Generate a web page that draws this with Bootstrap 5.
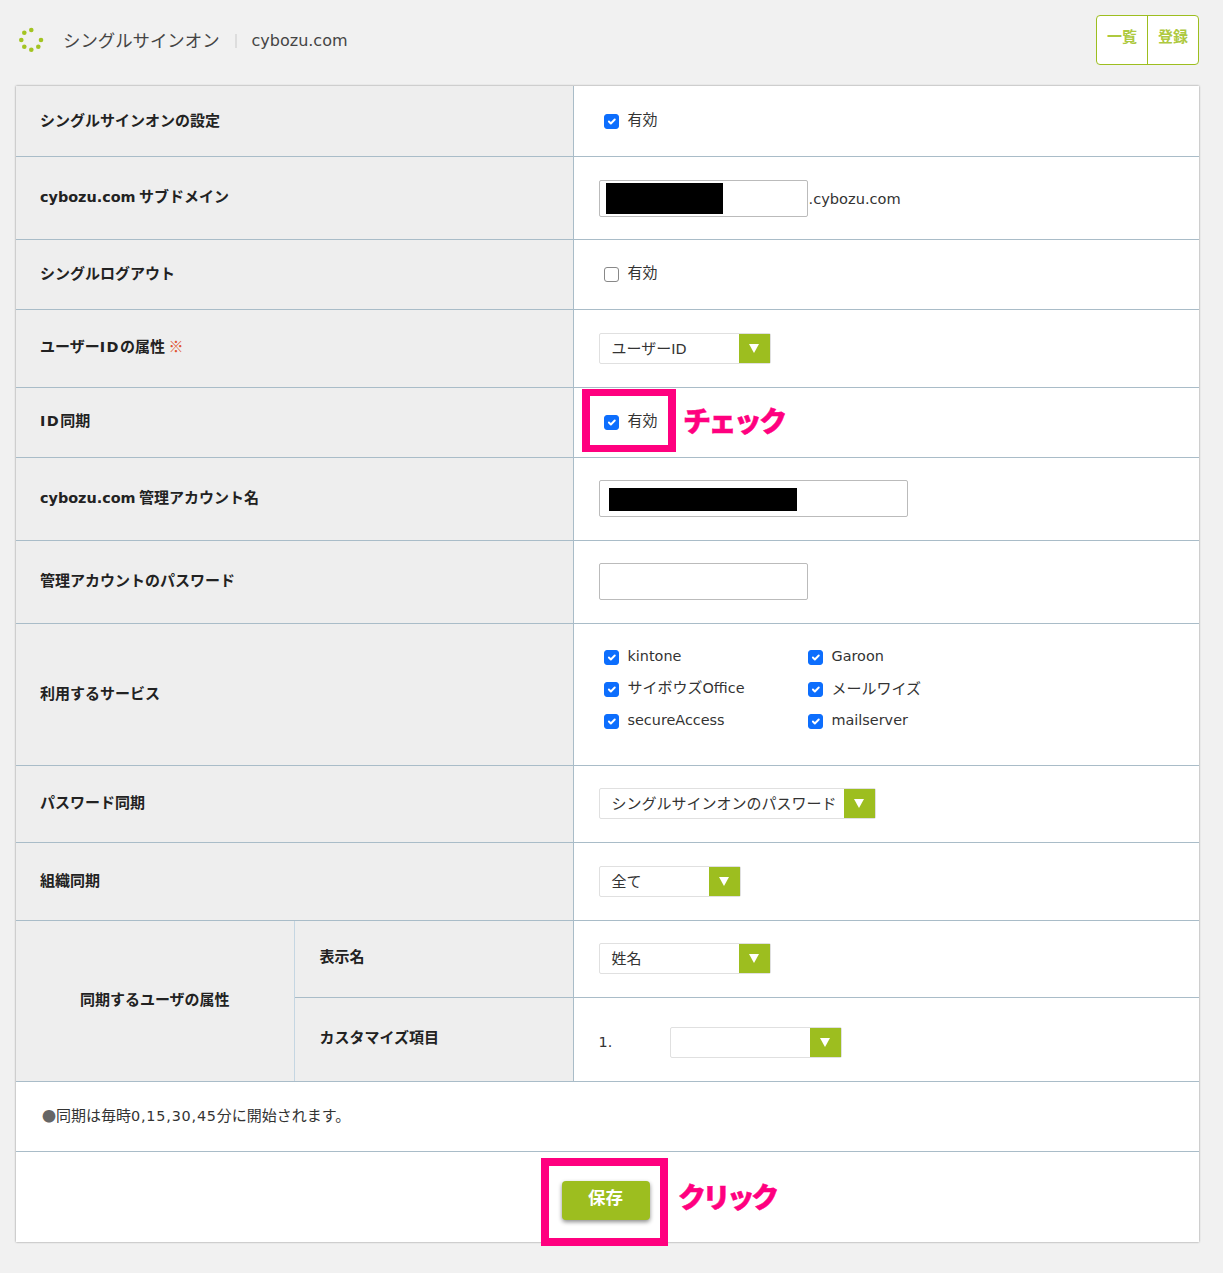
<!DOCTYPE html>
<html lang="ja"><head><meta charset="utf-8"><title>シングルサインオン</title>
<link rel="stylesheet" href="https://cdn.jsdelivr.net/npm/bootstrap@5.3.0/dist/css/bootstrap.min.css">
<style>
html,body{height:1273px;overflow:hidden}
body{background:#f1f1f1;color:#333;font-family:"Noto Sans CJK JP",sans-serif;font-size:15px;letter-spacing:0}
.lat{font-family:"DejaVu Sans",sans-serif;font-size:14.4px}
.lat-id{letter-spacing:1.5px}
.lat-num{letter-spacing:.8px}
.lat-dom{margin:2px 0 0 1px;font-size:14.6px}
.pagehead{height:86px;padding:15px 24px 0 18px}
.logo-dots{width:26px;height:26px;flex:none;margin-top:12px}
.head-title{font-size:17.4px;color:#444;margin-left:19px;margin-top:11px;line-height:28px}
.head-sep{width:2px;height:14px;background:#ddd;margin:19px 15px 0 15px}
.head-domain{font-family:"DejaVu Sans",sans-serif;font-size:16px;color:#444;margin-top:12px;line-height:28px}
.head-btns{display:flex;height:50px;border:1px solid #9dbe1f;border-radius:4px;background:#fff}
.head-btns span{width:50px;height:48px;text-align:center;font-weight:700;font-size:15px;line-height:40px;color:#aec93f}
.head-btns span+span{width:51px;border-left:1px solid #9dbe1f}
.sheet-wrap{position:relative;margin:0 23px 0 16px;width:1183px}
.form-sheet{width:1183px;table-layout:fixed;border-collapse:collapse;background:#fff;box-shadow:0 0 2px rgba(0,0,0,.45);margin:0}
.form-sheet td,.form-sheet th{border:1px solid #a9bcc8;padding:0;vertical-align:middle}
.form-sheet tr:first-child>*{border-top:0}
.form-sheet tr>*:first-child{border-left:0}
.form-sheet tr>*:last-child{border-right:0}
.form-sheet tr:last-child>*{border-bottom:0}
.form-sheet th{background:#eee;color:#222;font-weight:700;font-size:15px;padding:0 0 2px 24px}
.form-sheet th.attr-group{border-right-color:#c5d6e2;padding:0 0 3px 0;text-align:center}
.form-sheet th.attr-sub{border-left-color:#c5d6e2;padding:0 0 4px 25px}
.form-sheet td{padding-left:25px}
.form-sheet td.pad1{padding-top:1px}
.r70{height:70px}.r83{height:83px}.r78{height:78px}.r142{height:142px}.r77{height:77px}.r84{height:84px}.r91{height:91px}
.chk{display:inline-flex;align-items:center;color:#333;font-size:15px;line-height:22px}
.chk .form-check-input{width:15px;height:15px;margin:5px 9px 0 5px;border-color:#888;border-radius:3px}
.chk .form-check-input:checked{background-color:#0d6efd;border-color:#0d6efd}
.txt-box{height:37px;border:1px solid #bbb;border-radius:2px;background:#fff;display:block;position:relative}
.w209{width:209px}.w309{width:309px}
.redact{position:absolute;background:#000;display:block}
.pick{display:inline-flex;height:31px;border:1px solid #e0e0e0;border-radius:2px;background:#fff;vertical-align:middle;font-size:15px}
.pick-lbl{flex:1;padding-left:12px;line-height:28px;white-space:nowrap;color:#333}
.pick-arr{width:31px;background:#9dbe1f;flex:none;position:relative}
.pick-arr::after{content:"";position:absolute;left:10px;top:10px;border-style:solid;border-width:9px 5.5px 0 5.5px;border-color:#fff transparent transparent transparent}
.svc-grid{display:grid;grid-template-columns:204px 204px;row-gap:10px;margin-top:-13px}
.svc-grid .chk{height:22px}
.svc-grid .chk .form-check-input{margin-top:3px}
.req{color:#e0542e;font-weight:400;font-size:15px}
.note{color:#333;padding-bottom:10px}
.note i{color:#666;font-style:normal;font-size:14px;margin-left:1px}
.save-cell{padding:0!important;text-align:center}
.save-btn{width:88px;height:39px;background:#9dbe1f;border:0;border-radius:4px;color:#fff;font-weight:700;font-size:17.5px;box-shadow:0 2px 4px rgba(0,0,0,.45);padding:0 0 8px;margin:8px 0 0 -4px}
.mark-box{position:absolute;border:8px solid #ff007f;pointer-events:none}
.mark-a{left:566px;top:303px;width:94px;height:63px;border-width:7px 8px}
.mark-b{left:525px;top:1072px;width:127px;height:88px}
.mark-txt{position:absolute;color:#ff007f;font-weight:900;font-size:28px;letter-spacing:-2.6px;line-height:36px;font-family:"Noto Sans CJK JP",sans-serif;white-space:nowrap;-webkit-text-stroke:.5px #ff007f}
.mark-ta{left:667px;top:316px}
.mark-tb{left:662px;top:1092px;letter-spacing:-3.6px}
.num-lbl{display:inline-block;width:71px;vertical-align:middle}
.form-sheet td.cust-row{padding-top:7px}
</style></head><body>
<div class="pagehead d-flex align-items-start">
<svg class="logo-dots" viewBox="0 0 26 26"><g fill="#a3c422"><circle cx="13.3" cy="3" r="2.3"/><circle cx="6.3" cy="5.7" r="2.3"/><circle cx="3.3" cy="13" r="2.3"/><circle cx="6.3" cy="19.7" r="2.3"/><circle cx="13.3" cy="22.7" r="2.3"/><circle cx="20.3" cy="19.7" r="2.3"/><circle cx="23" cy="13" r="2.3"/></g></svg>
<div class="head-title">シングルサインオン</div><div class="head-sep"></div><div class="head-domain">cybozu.com</div>
<div class="head-btns ms-auto"><span>一覧</span><span>登録</span></div>
</div>
<div class="sheet-wrap">
<table class="form-sheet">
<colgroup><col style="width:278px"><col style="width:279px"><col></colgroup>
<tr class="r70"><th colspan="2">シングルサインオンの設定</th><td><label class="chk"><input class="form-check-input" type="checkbox" checked>有効</label></td></tr>
<tr class="r83"><th colspan="2"><span class="lat">cybozu.com</span> サブドメイン</th><td class="pad1"><div class="d-flex align-items-center"><span class="txt-box w209"><span class="redact" style="left:6px;top:2px;width:117px;height:31px"></span></span><span class="lat lat-dom">.cybozu.com</span></div></td></tr>
<tr class="r70"><th colspan="2">シングルログアウト</th><td><label class="chk"><input class="form-check-input" type="checkbox">有効</label></td></tr>
<tr class="r78"><th colspan="2">ユーザー<span class="lat lat-id">ID</span>の属性 <span class="req">※</span></th><td class="pad1"><div class="pick" style="width:172px"><span class="pick-lbl">ユーザー<span class="lat">ID</span></span><span class="pick-arr"></span></div></td></tr>
<tr class="r70"><th colspan="2"><span class="lat lat-id">ID</span>同期</th><td><label class="chk"><input class="form-check-input" type="checkbox" checked>有効</label></td></tr>
<tr class="r83"><th colspan="2"><span class="lat">cybozu.com</span> 管理アカウント名</th><td><span class="txt-box w309"><span class="redact" style="left:9px;top:7px;width:188px;height:23px"></span></span></td></tr>
<tr class="r83"><th colspan="2">管理アカウントのパスワード</th><td><span class="txt-box w209"></span></td></tr>
<tr class="r142"><th colspan="2">利用するサービス</th><td><div class="svc-grid">
<label class="chk"><input class="form-check-input" type="checkbox" checked><span class="lat">kintone</span></label><label class="chk"><input class="form-check-input" type="checkbox" checked><span class="lat">Garoon</span></label>
<label class="chk"><input class="form-check-input" type="checkbox" checked><span>サイボウズ<span class="lat">Office</span></span></label><label class="chk"><input class="form-check-input" type="checkbox" checked>メールワイズ</label>
<label class="chk"><input class="form-check-input" type="checkbox" checked><span class="lat">secureAccess</span></label><label class="chk"><input class="form-check-input" type="checkbox" checked><span class="lat">mailserver</span></label>
</div></td></tr>
<tr class="r77"><th colspan="2">パスワード同期</th><td><div class="pick" style="width:277px"><span class="pick-lbl">シングルサインオンのパスワード</span><span class="pick-arr"></span></div></td></tr>
<tr class="r78"><th colspan="2">組織同期</th><td class="pad1"><div class="pick" style="width:142px"><span class="pick-lbl">全て</span><span class="pick-arr"></span></div></td></tr>
<tr class="r77"><th rowspan="2" class="attr-group">同期するユーザの属性</th><th class="attr-sub">表示名</th><td><div class="pick" style="width:172px"><span class="pick-lbl">姓名</span><span class="pick-arr"></span></div></td></tr>
<tr class="r84"><th class="attr-sub">カスタマイズ項目</th><td class="cust-row"><span class="num-lbl lat">1.</span><div class="pick" style="width:172px"><span class="pick-lbl"></span><span class="pick-arr"></span></div></td></tr>
<tr class="r70"><td colspan="3" class="note"><i>●</i>同期は毎時<span class="lat lat-num">0,15,30,45</span>分に開始されます。</td></tr>
<tr class="r91"><td colspan="3" class="save-cell"><button class="save-btn" type="button">保存</button></td></tr>
</table>
<div class="mark-box mark-a"></div><div class="mark-txt mark-ta">チェック</div>
<div class="mark-box mark-b"></div><div class="mark-txt mark-tb">クリック</div>
</div>
</body></html>
